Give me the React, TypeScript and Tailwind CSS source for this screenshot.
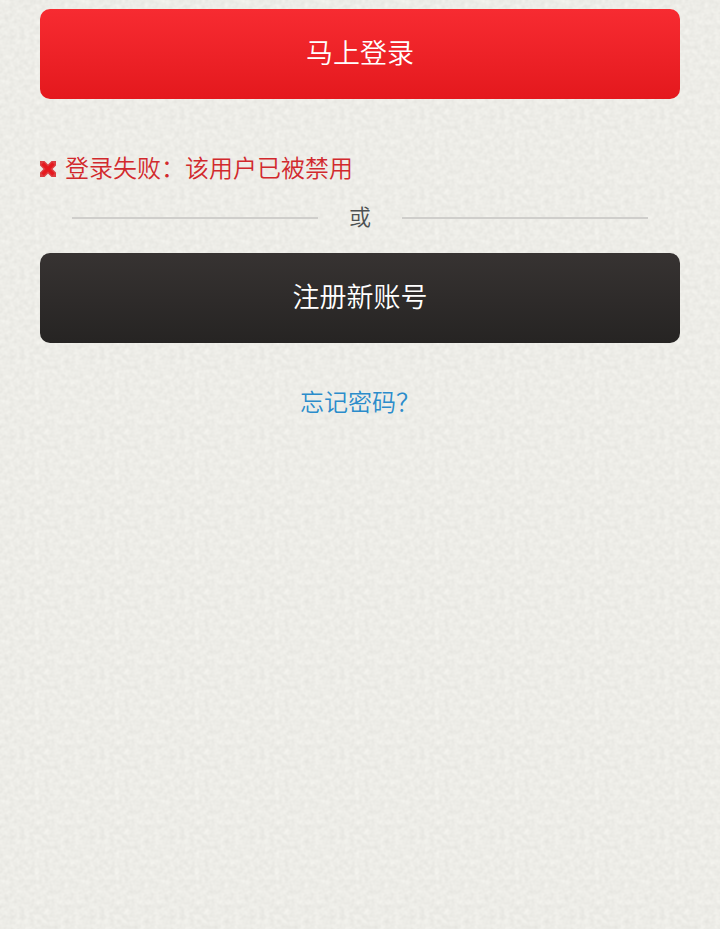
import type { ButtonHTMLAttributes } from 'react';
import clsx from 'clsx';

type ButtonVariant = 'primary' | 'dark';

const buttonVariant: Record<ButtonVariant, string> = {
  primary: 'from-[#f72b31] to-[#e4181d]',
  dark: 'from-[#373332] to-[#262423]',
};

interface ActionButtonProps extends ButtonHTMLAttributes<HTMLButtonElement> {
  variant: ButtonVariant;
}

function ActionButton({ variant, children, ...props }: ActionButtonProps) {
  return (
    <button
      className={clsx(
        'h-[90px] w-full cursor-pointer rounded-[10px] bg-linear-to-b pb-1 text-[27px] leading-9 font-[350] text-white',
        buttonVariant[variant],
      )}
      {...props}
    >
      {children}
    </button>
  );
}

// Paper grain, repeated every 80px
function PaperTexture() {
  return (
    <svg className="absolute inset-0 -z-10 h-full w-full" aria-hidden="true">
      <defs>
        <filter id="grain" x="0" y="0" width="100%" height="100%" colorInterpolationFilters="sRGB">
          <feTurbulence type="fractalNoise" baseFrequency="0.2" numOctaves="2" seed="8" stitchTiles="stitch" />
          <feColorMatrix
            type="matrix"
            values="0.08 0 0 0 0.889
                    0.08 0 0 0 0.887
                    0.08 0 0 0 0.867
                    0 0 0 0 1"
          />
        </filter>
        <pattern id="paper" width="80" height="80" patternUnits="userSpaceOnUse">
          <rect width="80" height="80" filter="url(#grain)" />
        </pattern>
      </defs>
      <rect width="100%" height="100%" fill="url(#paper)" />
    </svg>
  );
}

function ErrorIcon() {
  return (
    <svg className="size-4 shrink-0" viewBox="0 0 16 16" aria-hidden="true">
      <path
        d="M0 0H4.5L8 3.5L11.5 0H16V4.5L12.5 8L16 11.5V16H11.5L8 12.5L4.5 16H0V11.5L3.5 8L0 4.5Z"
        fill="#dc3f42"
      />
      <path d="M2.5 2.5L13.5 13.5M13.5 2.5L2.5 13.5" stroke="#e6191e" strokeWidth="3.2" />
    </svg>
  );
}

export default function App() {
  return (
    <main className="relative isolate min-h-screen bg-[#edece8] px-10 pt-[9px] font-['Noto_Sans_CJK_SC',sans-serif] font-[350]">
      <PaperTexture />
      <ActionButton variant="primary">马上登录</ActionButton>

      <p role="alert" className="mt-[50px] flex items-center gap-[9px] text-[24px] leading-9 text-[#d2292d]">
        <ErrorIcon />
        <span className="pb-1">登录失败：该用户已被禁用</span>
      </p>

      <div className="mt-[10px] flex items-center gap-[31px] px-8 text-[22px] leading-8 text-[#4d5152]">
        <span className="h-[2px] flex-1 bg-[#cfcecb]" />
        <span className="pb-1.5">或</span>
        <span className="h-[2px] flex-1 bg-[#cfcecb]" />
      </div>

      <div className="mt-4">
        <ActionButton variant="dark">注册新账号</ActionButton>
      </div>

      <p className="mt-10 text-center text-[24px] leading-9">
        <a href="#forgot" className="text-[#2b8ccb]">
          忘记密码？
        </a>
      </p>
    </main>
  );
}
